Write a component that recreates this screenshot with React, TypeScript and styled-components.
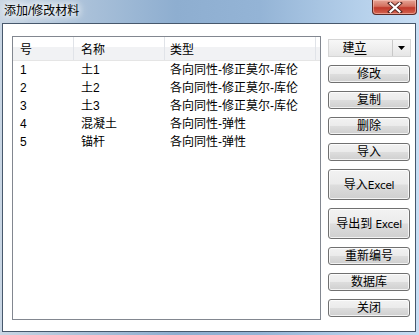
import React from "react";
import styled, { createGlobalStyle } from "styled-components";

const GlobalStyle = createGlobalStyle`
  html, body {
    margin: 0;
    padding: 0;
    background: #ffffff;
  }
  body {
    font-family: "Liberation Sans", "Noto Sans CJK SC", sans-serif;
    font-size: 12px;
    color: #000;
  }
`;

const Window = styled.div`
  width: 419px;
  height: 335px;
  box-sizing: border-box;
  display: flex;
  flex-direction: column;
  padding: 0 3px 3px 2px;
  background: linear-gradient(
    90deg,
    #c9d6e4 0%,
    #adc3da 18%,
    #8eaed0 42%,
    #94b4d6 62%,
    #b4cfea 85%,
    #c8def4 100%
  );
`;

const TitleBar = styled.div`
  height: 23px;
  display: flex;
  align-items: flex-start;
  justify-content: space-between;
`;

const Title = styled.div`
  padding: 4px 0 0 2px;
  line-height: 15px;
  color: #000;
  text-shadow: 0 0 6px #fff, 0 0 10px #fff, 0 0 12px #fff;
`;

const CloseButton = styled.div`
  width: 45px;
  height: 15px;
  box-sizing: border-box;
  margin-right: -1px;
  display: flex;
  align-items: center;
  justify-content: center;
  border: 1px solid #5a2a26;
  border-top: none;
  border-radius: 0 0 4px 4px;
  background: linear-gradient(180deg, #e5a596 0%, #d4705f 45%, #c0392b 55%, #d4644f 100%);
  box-shadow: inset 0 0 0 1px rgba(255, 210, 200, 0.5);
`;

const Client = styled.div`
  flex: 1;
  display: flex;
  background: #ffffff;
  border: 1px solid #47586c;
  padding: 12px 3px 11px 9px;
`;

const ListView = styled.div`
  width: 309px;
  height: 284px;
  box-sizing: border-box;
  border: 1px solid #828790;
  background: #fff;
`;

const Header = styled.div`
  display: flex;
  height: 24px;
  box-sizing: border-box;
  border-bottom: 1px solid #e5e5e5;
  background: linear-gradient(180deg, #ffffff 0%, #ffffff 42%, #f1f2f4 43%, #f1f2f4 100%);
`;

interface ColProps {
  $w?: number;
}

const HeaderCell = styled.div<ColProps>`
  width: ${({ $w }) => ($w ? `${$w}px` : "auto")};
  flex: ${({ $w }) => ($w ? "none" : "1")};
  box-sizing: border-box;
  padding: 5px 0 0 7px;
  line-height: 16px;
  border-right: ${({ $w }) => ($w ? "1px solid #e0e3e8" : "none")};
`;

const Row = styled.div`
  display: flex;
  height: 18px;
  align-items: center;
  line-height: 16px;
  &:first-of-type {
    margin-top: 2px;
  }
`;

const Cell = styled.div<ColProps>`
  width: ${({ $w }) => ($w ? `${$w}px` : "auto")};
  box-sizing: border-box;
  padding-left: 7px;
  white-space: nowrap;
`;

const Side = styled.div`
  width: 83px;
  margin: 3px 0 0 7px;
  display: flex;
  flex-direction: column;
  gap: 8px;
`;

const Split = styled.div`
  height: 18px;
  display: flex;
  box-sizing: border-box;
  border: 1px solid #d5d5d5;
  background: linear-gradient(180deg, #f7f7f7 0%, #efefef 50%, #e6e6e6 100%);
`;

const SplitMain = styled.div`
  flex: 1;
  display: flex;
  align-items: center;
  justify-content: center;
  padding-right: 12px;
  line-height: 16px;
  border-right: 1px solid #c8c8c8;
`;

const SplitArrow = styled.div`
  width: 17px;
  display: flex;
  align-items: center;
  justify-content: center;
`;

const Underlined = styled.span`
  text-decoration: underline;
  text-underline-offset: 2px;
`;

interface ButtonProps {
  $tall?: boolean;
}

const Button = styled.div<ButtonProps>`
  height: ${({ $tall }) => ($tall ? "31px" : "18px")};
  width: 82px;
  box-sizing: border-box;
  display: flex;
  align-items: center;
  justify-content: center;
  border: 1px solid #707070;
  border-radius: 3px;
  line-height: 16px;
  background: linear-gradient(180deg, #f2f2f2 0%, #ebebeb 48%, #dddddd 52%, #cfcfcf 100%);
  box-shadow: inset 0 0 0 1px rgba(255, 255, 255, 0.75);
`;

const Latin = styled.span`
  font-family: "DejaVu Sans", "Liberation Sans", sans-serif;
  font-size: 10.5px;
  letter-spacing: -0.3px;
`;

const rows = [
  ["1", "土1", "各向同性-修正莫尔-库伦"],
  ["2", "土2", "各向同性-修正莫尔-库伦"],
  ["3", "土3", "各向同性-修正莫尔-库伦"],
  ["4", "混凝土", "各向同性-弹性"],
  ["5", "锚杆", "各向同性-弹性"],
];

const App = () => {
  return (
    <>
      <GlobalStyle />
      <Window>
        <TitleBar>
          <Title>添加/修改材料</Title>
          <CloseButton>
            <svg width="16" height="11" viewBox="0 0 16 11">
              <path
                d="M3 1 L13 10 M13 1 L3 10"
                stroke="#5a2a26"
                strokeWidth="4"
                strokeLinecap="square"
              />
              <path
                d="M3.5 1.5 L12.5 9.5 M12.5 1.5 L3.5 9.5"
                stroke="#ffffff"
                strokeWidth="2.2"
                strokeLinecap="square"
              />
            </svg>
          </CloseButton>
        </TitleBar>
        <Client>
          <ListView>
            <Header>
              <HeaderCell $w={61}>号</HeaderCell>
              <HeaderCell $w={91}>名称</HeaderCell>
              <HeaderCell $w={151} style={{ paddingLeft: 5 }}>
                类型
              </HeaderCell>
              <HeaderCell />
            </Header>
            {rows.map((r) => (
              <Row key={r[0]}>
                <Cell $w={61}>{r[0]}</Cell>
                <Cell $w={91}>{r[1]}</Cell>
                <Cell style={{ paddingLeft: 5 }}>{r[2]}</Cell>
              </Row>
            ))}
          </ListView>
          <Side>
            <Split>
              <SplitMain>
                建<Underlined>立</Underlined>
              </SplitMain>
              <SplitArrow>
                <svg width="7" height="4" viewBox="0 0 7 4">
                  <path d="M0 0 H7 L3.5 4 Z" fill="#000" />
                </svg>
              </SplitArrow>
            </Split>
            <Button>修改</Button>
            <Button>复制</Button>
            <Button>删除</Button>
            <Button>导入</Button>
            <Button $tall>
              导入<Latin>Excel</Latin>
            </Button>
            <Button $tall>
              导出到&nbsp;<Latin>Excel</Latin>
            </Button>
            <Button>重新编号</Button>
            <Button>数据库</Button>
            <Button>关闭</Button>
          </Side>
        </Client>
      </Window>
    </>
  );
};

export default App;
